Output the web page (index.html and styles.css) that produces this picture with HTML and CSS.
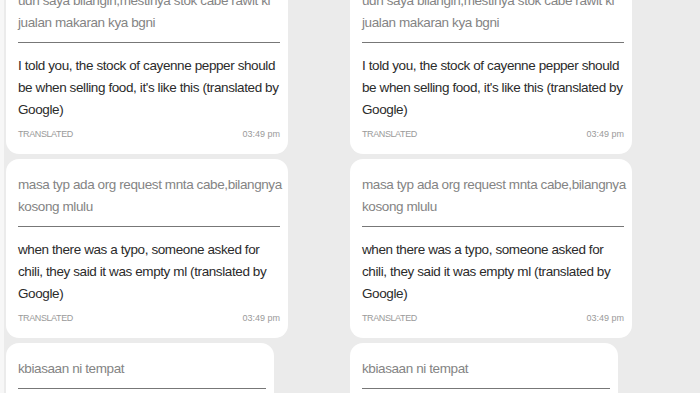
FILE: index.html
```html
<!DOCTYPE html>
<html lang="id">
<head>
  <meta charset="UTF-8" />
  <meta name="viewport" content="width=device-width, initial-scale=1.0"/>
  <title>Chat - Terjemahan</title>
  <link rel="stylesheet" href="styles.css">
</head>
<body>
  <div class="screens">
    <section class="chat">
      <div class="bubble">
        <p class="original">udh saya bilangin,mestinya stok cabe rawit ki<br>jualan makaran kya bgni</p>
        <p class="translation">I told you, the stock of cayenne pepper should<br>be when selling food, it's like this (translated by<br>Google)</p>
        <div class="meta"><span class="label">TRANSLATED</span><span>03:49 pm</span></div>
      </div>
      <div class="bubble">
        <p class="original">masa typ ada org request mnta cabe,bilangnya<br>kosong mlulu</p>
        <p class="translation">when there was a typo, someone asked for<br>chili, they said it was empty ml (translated by<br>Google)</p>
        <div class="meta"><span class="label">TRANSLATED</span><span>03:49 pm</span></div>
      </div>
      <div class="bubble short">
        <p class="original">kbiasaan ni tempat</p>
        <p class="translation">habits of this place (translated by Google)</p>
      </div>
    </section>

    <section class="chat">
      <div class="bubble">
        <p class="original">udh saya bilangin,mestinya stok cabe rawit ki<br>jualan makaran kya bgni</p>
        <p class="translation">I told you, the stock of cayenne pepper should<br>be when selling food, it's like this (translated by<br>Google)</p>
        <div class="meta"><span class="label">TRANSLATED</span><span>03:49 pm</span></div>
      </div>
      <div class="bubble">
        <p class="original">masa typ ada org request mnta cabe,bilangnya<br>kosong mlulu</p>
        <p class="translation">when there was a typo, someone asked for<br>chili, they said it was empty ml (translated by<br>Google)</p>
        <div class="meta"><span class="label">TRANSLATED</span><span>03:49 pm</span></div>
      </div>
      <div class="bubble short">
        <p class="original">kbiasaan ni tempat</p>
        <p class="translation">habits of this place (translated by Google)</p>
      </div>
    </section>
  </div>
</body>
</html>
```

FILE: styles.css
```css
body {
  margin: 0;
  height: 393px;
  overflow: hidden;
  font-family: "Liberation Sans", Arial, sans-serif;
  background: linear-gradient(to right, #f7f7f7 4px, #ebebeb 4px);
}
.screens {
  display: grid;
  grid-template-columns: 344px 344px;
  margin-top: -25px;
}
.chat {
  display: flex;
  flex-direction: column;
  gap: 5px;
  padding-left: 6px;
}
.bubble {
  width: 282px;
  box-sizing: border-box;
  background: white;
  border-radius: 13px;
  padding: 15px 8px 13px 12px;
}
.bubble.short {
  width: 268px;
}
.original,
.translation {
  margin: 0;
  font-size: 13.5px;
  line-height: 22px;
  letter-spacing: -0.4px;
  white-space: nowrap;
}
.original {
  color: #848484;
  padding-bottom: 8px;
  border-bottom: 1px solid #777;
}
.translation {
  color: #2b2b2b;
  margin-top: 12px;
}
.meta {
  display: flex;
  justify-content: space-between;
  margin-top: 6px;
  font-size: 9px;
  line-height: 14px;
  color: #9a9a9a;
}
.meta .label {
  letter-spacing: -0.4px;
}
```
